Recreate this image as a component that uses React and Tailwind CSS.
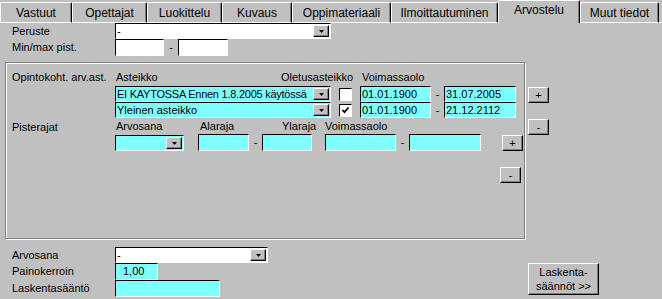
import React from 'react';

const tabs = [
  { label: 'Vastuut', w: 'w-[72px]' },
  { label: 'Opettajat', w: 'w-[75px]' },
  { label: 'Luokittelu', w: 'w-[75px]' },
  { label: 'Kuvaus', w: 'w-[70px]' },
  { label: 'Oppimateriaali', w: 'w-[99px]' },
  { label: 'Ilmoittautuminen', w: 'w-[107px]' },
  { label: 'Arvostelu', w: 'w-[82px]', active: true },
  { label: 'Muut tiedot', w: 'w-[79px]' },
];

const TabBar = () => (
  <div className="flex items-end h-[23px]">
    {tabs.map((t) =>
      t.active ? (
        <div
          key={t.label}
          className={`${t.w} h-[23px] flex justify-center pt-[3px] text-[12px] border-t border-l border-t-white border-l-white border-r border-r-black rounded-t-[2px] shadow-[inset_-1px_0_0_#808080]`}
        >
          {t.label}
        </div>
      ) : (
        <div
          key={t.label}
          className={`${t.w} h-[21px] flex items-center justify-center pt-[1px] text-[12px] border-t border-l border-b border-t-white border-l-white border-b-white border-r border-r-black rounded-t-[2px] shadow-[inset_-1px_0_0_#808080]`}
        >
          {t.label}
        </div>
      )
    )}
    <div className="flex-1 border-b border-b-white" />
  </div>
);

// sunken edit box
const Field = ({ w, h = 'h-[16px]', bg = 'bg-[#80ffff]', className = '', children }) => (
  <div
    className={`${w} ${h} ${bg} ${className} flex items-center whitespace-nowrap overflow-hidden border border-t-black border-l-black border-r-white border-b-white pl-[1px]`}
  >
    {children}
  </div>
);

const DropBtn = () => (
  <div className="w-[16px] h-[12px] mr-[1px] shrink-0 bg-[#c0c0c0] border border-t-white border-l-white border-r-black border-b-black shadow-[inset_-1px_-1px_0_#808080] flex items-end justify-center pb-[2px]">
    <svg width="7" height="4" viewBox="0 0 7 4">
      <path d="M1 0h5L3.5 3z" fill="black" />
    </svg>
  </div>
);

const Combo = ({ w, bg = 'bg-[#80ffff]', text, tight = false }) => (
  <div
    className={`${w} h-[16px] ${bg} flex items-center border border-t-black border-l-black border-r-white border-b-white pl-[1px]`}
  >
    <span className={`flex-1 whitespace-nowrap overflow-hidden ${tight ? 'tracking-[-0.25px]' : ''}`}>{text}</span>
    <DropBtn />
  </div>
);

const Check = ({ checked }) => (
  <div className="w-[13px] h-[13px] bg-white border border-t-black border-l-black border-r-white border-b-white flex items-center justify-center">
    {checked && (
      <svg width="9" height="9" viewBox="0 0 9 9">
        <path d="M1.5 4l2 2.2L7.5 1.5" stroke="black" strokeWidth="1.8" fill="none" />
      </svg>
    )}
  </div>
);

const Btn = ({ w = 'w-[21px]', h = 'h-[16px]', className = '', children }) => (
  <div
    className={`${w} ${h} ${className} bg-[#c0c0c0] flex flex-col items-center justify-center leading-[14px] border border-t-white border-l-white border-r-black border-b-black shadow-[inset_-1px_-1px_0_#808080]`}
  >
    {children}
  </div>
);

const Dash = ({ w = 'w-[14px]' }) => <div className={`${w} text-center`}>-</div>;

const GroupBox = () => (
  <div className="ml-[5px] w-[520px] h-[177px] border border-[#808080] shadow-[inset_1px_1px_0_#fff,1px_1px_0_#fff] pl-[6px]">
    {/* opintokohtainen arviointiasteikko */}
    <div className="flex items-center h-[14px] mt-[7px]">
      <div className="w-[103px]">Opintokoht. arv.ast.</div>
      <div className="w-[166px] pl-[1px]">Asteikko</div>
      <div className="w-[81px]">Oletusasteikko</div>
      <div>Voimassaolo</div>
    </div>
    <div className="flex items-center h-[16px] mt-[2px]">
      <div className="w-[103px]" />
      <Combo w="w-[216px]" text="EI KAYTOSSA Ennen 1.8.2005 käytössä" tight />
      <div className="ml-[8px]">
        <Check />
      </div>
      <Field w="w-[71px]" className="ml-[8px]">01.01.1900</Field>
      <Dash w="w-[13px]" />
      <Field w="w-[72px]">31.07.2005</Field>
    </div>
    <div className="flex items-center h-[16px]">
      <div className="w-[103px]" />
      <Combo w="w-[216px]" text="Yleinen asteikko" />
      <div className="ml-[8px]">
        <Check checked />
      </div>
      <Field w="w-[71px]" className="ml-[8px]">01.01.1900</Field>
      <Dash w="w-[13px]" />
      <Field w="w-[72px]">21.12.2112</Field>
    </div>

    {/* pisterajat */}
    <div className="flex items-center h-[16px]">
      <div className="w-[103px] pt-[3px]">Pisterajat</div>
      <div className="w-[85px] pl-[1px]">Arvosana</div>
      <div className="w-[82px]">Alaraja</div>
      <div className="w-[43px]">Ylaraja</div>
      <div>Voimassaolo</div>
    </div>
    <div className="flex items-center h-[17px]">
      <div className="w-[103px]" />
      <Combo w="w-[69px]" text="" />
      <Field w="w-[51px]" h="h-[17px]" className="ml-[14px]" />
      <Dash w="w-[13px]" />
      <Field w="w-[50px]" h="h-[17px]" />
      <Field w="w-[71px]" h="h-[17px]" className="ml-[13px]" />
      <Dash w="w-[13px]" />
      <Field w="w-[72px]" h="h-[17px]" />
      <Btn className="ml-[21px]">+</Btn>
    </div>
    <div className="flex mt-[16px]">
      <Btn className="ml-[488px]">-</Btn>
    </div>
  </div>
);

export default function App() {
  return (
    <div className="w-[662px] h-[299px] overflow-hidden bg-[#c0c0c0] text-black text-[11px] leading-[13px] font-['Liberation_Sans',Arial,sans-serif]">
      <TabBar />

      <div className="flex items-center h-[16px]">
        <div className="w-[115px] pl-[12px]">Peruste</div>
        <Combo w="w-[216px]" bg="bg-white" text="-" />
      </div>
      <div className="flex items-center h-[17px]">
        <div className="w-[115px] pl-[12px]">Min/max pist.</div>
        <Field w="w-[49px]" h="h-[17px]" bg="bg-white" />
        <Dash />
        <Field w="w-[50px]" h="h-[17px]" bg="bg-white" />
      </div>

      <div className="flex mt-[6px]">
        <GroupBox />
        <div className="flex flex-col gap-[16px] ml-[3px] pt-[25px]">
          <Btn>+</Btn>
          <Btn>-</Btn>
        </div>
      </div>

      <div className="flex mt-[8px]">
        <div className="w-[528px]">
          <div className="flex items-center h-[16px]">
            <div className="w-[115px] pl-[12px]">Arvosana</div>
            <Combo w="w-[153px]" bg="bg-white" text="-" />
          </div>
          <div className="flex items-center h-[17px]">
            <div className="w-[115px] pl-[12px]">Painokerroin</div>
            <Field w="w-[43px]" h="h-[17px]" className="pl-[7px]">1,00</Field>
          </div>
          <div className="flex items-center h-[17px]">
            <div className="w-[115px] pl-[12px]">Laskentasääntö</div>
            <Field w="w-[105px]" h="h-[17px]" />
          </div>
        </div>
        <Btn w="w-[71px]" h="h-[32px]" className="mt-[16px]">
          <span>Laskenta-</span>
          <span>säännöt &gt;&gt;</span>
        </Btn>
      </div>
    </div>
  );
}
